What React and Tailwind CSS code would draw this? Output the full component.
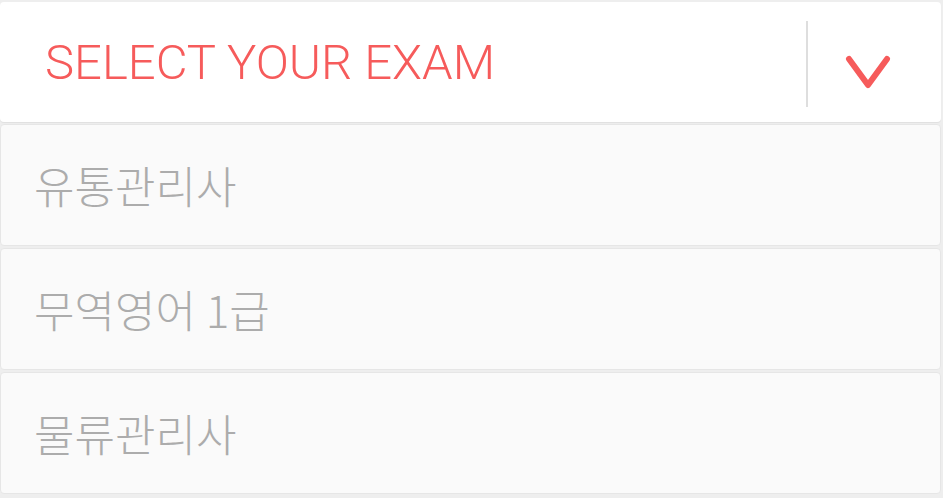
const exams = ['유통관리사', '무역영어 1급', '물류관리사'];

function Chevron() {
  return (
    <svg width="48" height="40" viewBox="0 0 48 40" fill="none">
      <path d="M5 7 L24 33 L43 7" stroke="#f65b5b" strokeWidth="6" strokeLinecap="round" strokeLinejoin="round" />
    </svg>
  );
}

export default function App() {
  return (
    <div className="w-[943px] h-[498px] bg-[#eeeeee] flex flex-col gap-[2px] pt-[2px] pr-[2px] overflow-hidden">
      <div className="h-[120px] bg-white rounded-[4px] shadow-[0_1px_1px_rgba(0,0,0,0.06)] flex items-center">
        <div className="flex-1 pl-[45px] text-[49px] leading-none font-light text-[#f65b5b] font-['Roboto',sans-serif]">
          SELECT YOUR EXAM
        </div>
        <div className="w-[2px] h-[86px] mt-[4px] bg-[#dedede]" />
        <div className="w-[133px] flex items-center pl-[36px] pt-[20px]">
          <Chevron />
        </div>
      </div>
      {exams.map((name) => (
        <div
          key={name}
          className="h-[122px] bg-[#fafafa] rounded-[4px] border border-[#e6e6e6] flex items-center pl-[33px]"
        >
          <span className="text-[44px] leading-none font-light text-[#acacac] font-['Noto_Sans_CJK_KR',sans-serif]">
            {name}
          </span>
        </div>
      ))}
    </div>
  );
}
